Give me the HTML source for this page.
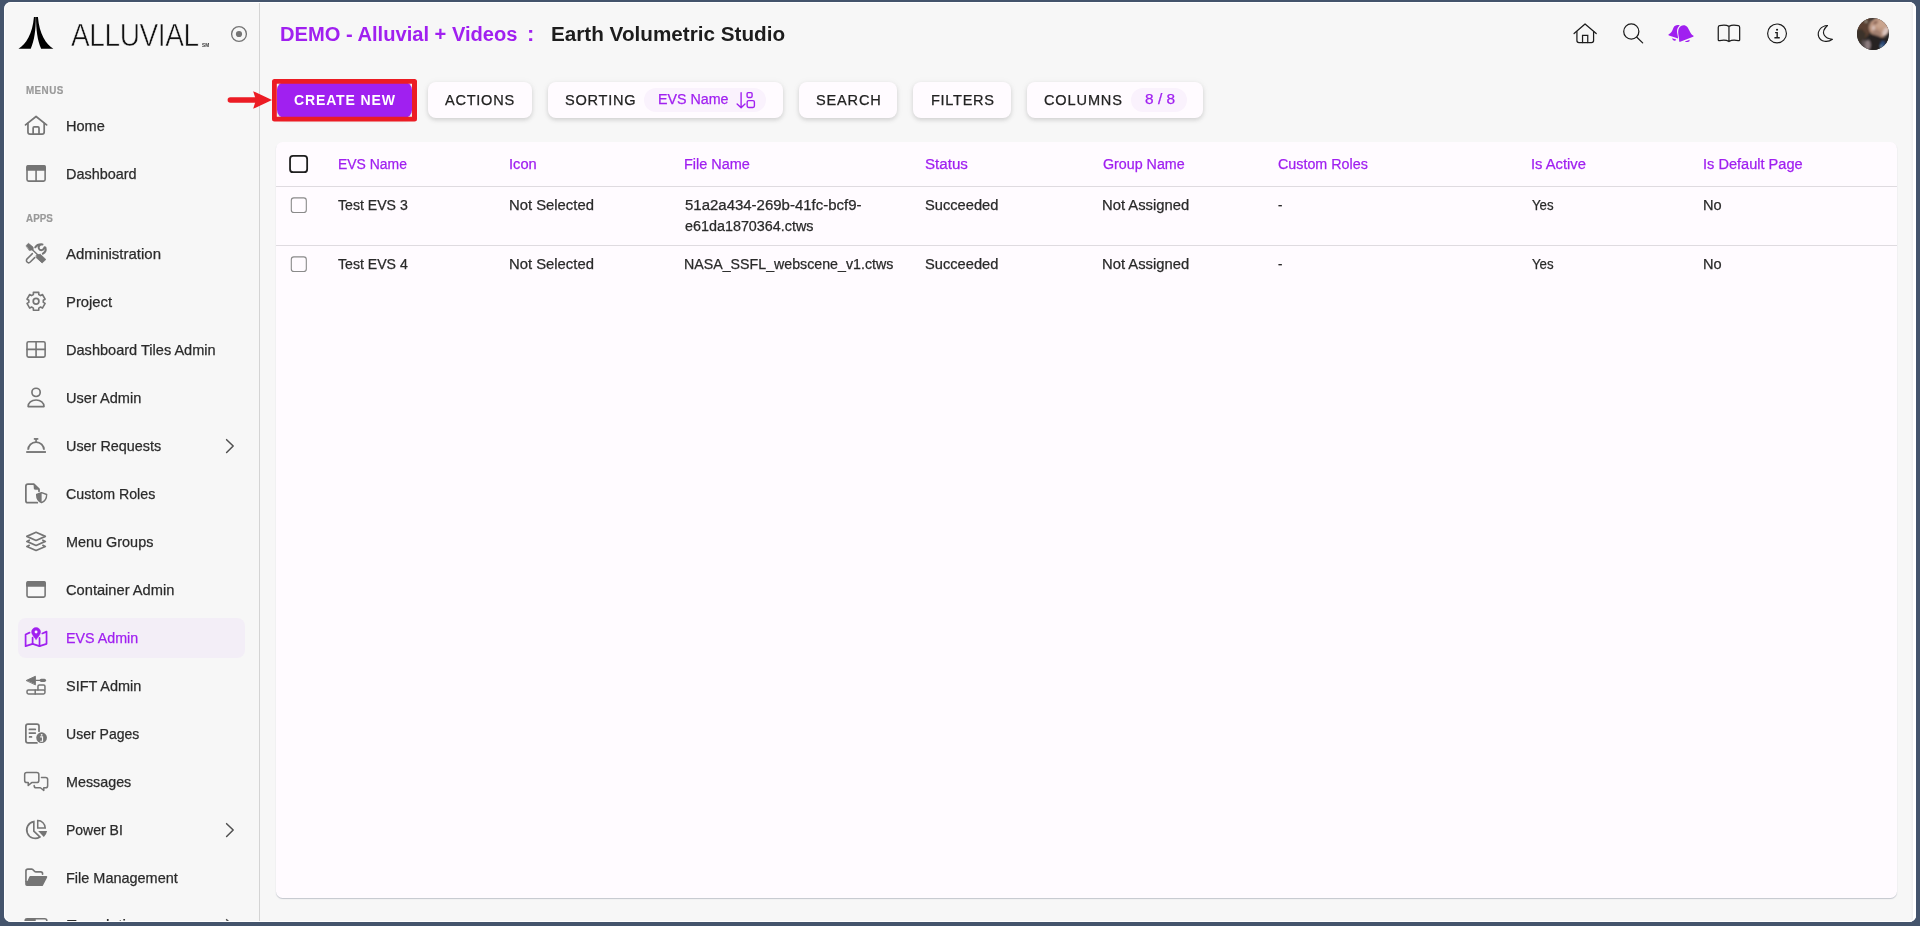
<!DOCTYPE html>
<html lang="en">
<head>
<meta charset="utf-8">
<title>Earth Volumetric Studio</title>
<style>
*{box-sizing:border-box;margin:0;padding:0}
html,body{width:1920px;height:926px;overflow:hidden;background:#44546c}
body{font-family:"Liberation Sans",sans-serif;color:#222;position:relative}
#app{position:absolute;left:4px;top:2px;width:1912px;height:920px;background:#f7f7f7;border-radius:7px;overflow:hidden}
#pg{position:absolute;left:-4px;top:-2px;width:1920px;height:926px}
#edge{position:absolute;left:4px;top:2px;width:1912px;height:920px;border-radius:7px;box-shadow:inset 0 0 0 1px #fff;pointer-events:none}
.a{position:absolute}
.x{position:absolute;white-space:nowrap;line-height:20px;transform-origin:0 50%;-webkit-text-stroke:.25px currentColor}
#sideline{position:absolute;left:259px;top:0;width:1px;height:926px;background:#d4d4d4}
.on{position:absolute;left:18px;top:618px;width:227px;height:40px;border-radius:8px;background:#f3eef7}
.btn{position:absolute;top:82px;height:36px;border-radius:8px;background:#fffbff;box-shadow:0 2px 4px rgba(0,0,0,.13),0 1px 8px rgba(0,0,0,.05)}
.chip{position:absolute;top:88px;height:24px;border-radius:12px;background:#faf2fd}
#card{position:absolute;left:276px;top:142px;width:1621px;height:756px;background:#fffbff;border-radius:6.5px;box-shadow:0 1px 1px rgba(100,110,130,.35)}
.hl{position:absolute;left:276px;width:1621px;height:1px;background:#dfdbe0}
.cb{position:absolute;border-radius:3px;background:#fffbff}
svg{position:absolute;overflow:visible}
</style>
</head>
<body>
<div id="app"><div id="pg">

<div class="a" style="left:1910px;top:0;width:3px;height:926px;background:linear-gradient(90deg,#f7f7f7,#eeeeee)"></div><div class="a" style="left:1913px;top:0;width:4px;height:926px;background:#fff"></div>
<!-- sidebar -->
<div id="sideline"></div>
<div class="on"></div>

<!-- toolbar -->
<div class="a" style="left:277px;top:82px;width:135px;height:36px;background:#a020f0;border-radius:8px;box-shadow:0 2px 4px rgba(0,0,0,.13)"></div>
<svg style="left:270px;top:77px" width="150" height="47" viewBox="270 77 150 47"><path fill="#ec1c24" fill-rule="evenodd" d="M274.5,79 H414.5 a2.5,2.5 0 0 1 2.5,2.5 V119 a2.5,2.5 0 0 1 -2.5,2.5 H274.5 a2.5,2.5 0 0 1 -2.5,-2.5 V81.5 a2.5,2.5 0 0 1 2.5,-2.5Z M276.8,83.8 V116.7 H412 V83.8Z"/></svg>
<div class="btn" style="left:428px;width:104px"></div>
<div class="btn" style="left:548px;width:235px"></div>
<div class="btn" style="left:799px;width:98px"></div>
<div class="btn" style="left:913px;width:98px"></div>
<div class="btn" style="left:1027px;width:176px"></div>
<div class="chip" style="left:644px;width:122px"></div>
<div class="chip" style="left:1131px;width:56px"></div>

<!-- table -->
<div id="card"></div>
<div class="hl" style="top:186px"></div>
<div class="hl" style="top:245px"></div>
<svg style="left:288px;top:154px" width="22" height="21" viewBox="288 154 22 21"><rect x="290.05" y="155.95" width="17.1" height="16.2" rx="3" fill="#fffbff" stroke="#1f1f1f" stroke-width="1.8"/></svg>
<svg style="left:289px;top:195px" width="20" height="20" viewBox="289 195 20 20"><rect x="291.3" y="197.9" width="15" height="14.6" rx="2.6" fill="#fffbff" stroke="#8a8a8a" stroke-width="1.1"/></svg>
<svg style="left:289px;top:254px" width="20" height="20" viewBox="289 254 20 20"><rect x="291.3" y="256.9" width="15" height="14.6" rx="2.6" fill="#fffbff" stroke="#8a8a8a" stroke-width="1.1"/></svg>

<span class="x" style="left:26.20px;top:80.29px;font-size:10.7px;color:#999999;letter-spacing:0.465px;font-weight:700;transform:scaleX(0.9200);-webkit-text-stroke:.2px #999999">MENUS</span>
<span class="x" style="left:26.20px;top:208.29px;font-size:10.7px;color:#999999;letter-spacing:0.052px;font-weight:700;transform:scaleX(0.9200);-webkit-text-stroke:.2px #999999">APPS</span>
<span class="x" style="left:65.52px;top:115.87px;font-size:14.8px;color:#2b2b2b;transform:scaleX(0.9832)">Home</span>
<span class="x" style="left:65.52px;top:163.87px;font-size:14.8px;color:#2b2b2b;transform:scaleX(0.9753)">Dashboard</span>
<span class="x" style="left:66.10px;top:243.87px;font-size:14.8px;color:#2b2b2b;transform:scaleX(1.0137)">Administration</span>
<span class="x" style="left:66.30px;top:291.87px;font-size:14.8px;color:#2b2b2b;transform:scaleX(1.0020)">Project</span>
<span class="x" style="left:65.52px;top:339.87px;font-size:14.8px;color:#2b2b2b;transform:scaleX(0.9835)">Dashboard Tiles Admin</span>
<span class="x" style="left:65.52px;top:387.87px;font-size:14.8px;color:#2b2b2b;transform:scaleX(0.9847)">User Admin</span>
<span class="x" style="left:65.53px;top:435.87px;font-size:14.8px;color:#2b2b2b;transform:scaleX(0.9724)">User Requests</span>
<span class="x" style="left:66.20px;top:483.87px;font-size:14.8px;color:#2b2b2b;transform:scaleX(0.9608)">Custom Roles</span>
<span class="x" style="left:65.53px;top:531.87px;font-size:14.8px;color:#2b2b2b;transform:scaleX(0.9745)">Menu Groups</span>
<span class="x" style="left:66.20px;top:579.87px;font-size:14.8px;color:#2b2b2b;transform:scaleX(0.9902)">Container Admin</span>
<span class="x" style="left:65.54px;top:627.87px;font-size:14.8px;color:#a020f0;transform:scaleX(0.9646)">EVS Admin</span>
<span class="x" style="left:66.20px;top:675.87px;font-size:14.8px;color:#2b2b2b;transform:scaleX(0.9771)">SIFT Admin</span>
<span class="x" style="left:65.55px;top:723.87px;font-size:14.8px;color:#2b2b2b;transform:scaleX(0.9485)">User Pages</span>
<span class="x" style="left:65.53px;top:771.87px;font-size:14.8px;color:#2b2b2b;transform:scaleX(0.9676)">Messages</span>
<span class="x" style="left:66.35px;top:819.87px;font-size:14.8px;color:#2b2b2b;transform:scaleX(0.9461)">Power BI</span>
<span class="x" style="left:65.52px;top:867.87px;font-size:14.8px;color:#2b2b2b;transform:scaleX(0.9778)">File Management</span>
<span class="x" style="left:66.50px;top:914.87px;font-size:14.8px;color:#2b2b2b;transform:scaleX(1.0484)">Translations</span>
<span class="x" style="left:71.10px;top:25.43px;font-size:30.5px;color:#111111;letter-spacing:-0.456px;transform:scaleX(0.9200);-webkit-text-stroke:0.6px #f7f7f7">ALLUVIAL</span>
<span class="x" style="left:201.80px;top:35.67px;font-size:4.7px;color:#333333;font-weight:700;transform:scaleX(1.0103);-webkit-text-stroke:0">SM</span>
<span class="x" style="left:280.29px;top:24.07px;font-size:20px;color:#a020f0;font-weight:700;transform:scaleX(1.0056);-webkit-text-stroke:0">DEMO - Alluvial + Videos</span>
<span class="x" style="left:526.70px;top:24.07px;font-size:20px;color:#a020f0;font-weight:700;transform:scaleX(1.1000);-webkit-text-stroke:0">:</span>
<span class="x" style="left:550.97px;top:24.07px;font-size:20px;color:#1d1d1d;font-weight:700;transform:scaleX(1.0342);-webkit-text-stroke:0">Earth Volumetric Studio</span>
<span class="x" style="left:293.50px;top:90.15px;font-size:14px;color:#ffffff;letter-spacing:0.849px;font-weight:700;transform:scaleX(1.0020);-webkit-text-stroke:0">CREATE NEW</span>
<span class="x" style="left:445.40px;top:90.15px;font-size:14px;color:#222222;letter-spacing:0.711px;transform:scaleX(1.0400)">ACTIONS</span>
<span class="x" style="left:564.90px;top:90.15px;font-size:14px;color:#222222;letter-spacing:0.730px;transform:scaleX(1.0400)">SORTING</span>
<span class="x" style="left:816.40px;top:90.15px;font-size:14px;color:#222222;letter-spacing:0.784px;transform:scaleX(1.0400)">SEARCH</span>
<span class="x" style="left:930.66px;top:90.15px;font-size:14px;color:#222222;letter-spacing:0.674px;transform:scaleX(1.0400)">FILTERS</span>
<span class="x" style="left:1044.40px;top:90.15px;font-size:14px;color:#222222;letter-spacing:0.824px;transform:scaleX(1.0400)">COLUMNS</span>
<span class="x" style="left:658.48px;top:89.15px;font-size:14px;color:#a020f0;transform:scaleX(1.0181)">EVS Name</span>
<span class="x" style="left:1144.60px;top:89.15px;font-size:14px;color:#a020f0;letter-spacing:0.023px;transform:scaleX(1.1000)">8 / 8</span>
<span class="x" style="left:337.61px;top:154.15px;font-size:14px;color:#a020f0;transform:scaleX(0.9947)">EVS Name</span>
<span class="x" style="left:509.25px;top:154.15px;font-size:14px;color:#a020f0;transform:scaleX(1.0456)">Icon</span>
<span class="x" style="left:683.67px;top:154.15px;font-size:14px;color:#a020f0;transform:scaleX(1.0332)">File Name</span>
<span class="x" style="left:925.10px;top:154.15px;font-size:14px;color:#a020f0;transform:scaleX(1.0809)">Status</span>
<span class="x" style="left:1102.50px;top:154.15px;font-size:14px;color:#a020f0;transform:scaleX(1.0192)">Group Name</span>
<span class="x" style="left:1277.80px;top:154.15px;font-size:14px;color:#a020f0;transform:scaleX(1.0214)">Custom Roles</span>
<span class="x" style="left:1531.25px;top:154.15px;font-size:14px;color:#a020f0;transform:scaleX(1.0534)">Is Active</span>
<span class="x" style="left:1703.16px;top:154.15px;font-size:14px;color:#a020f0;transform:scaleX(1.0407)">Is Default Page</span>
<span class="x" style="left:338.00px;top:195.15px;font-size:14px;color:#2a2a2a;transform:scaleX(1.0076)">Test EVS 3</span>
<span class="x" style="left:509.44px;top:195.15px;font-size:14px;color:#2a2a2a;transform:scaleX(1.0591)">Not Selected</span>
<span class="x" style="left:925.10px;top:195.15px;font-size:14px;color:#2a2a2a;transform:scaleX(1.0467)">Succeeded</span>
<span class="x" style="left:1102.24px;top:195.15px;font-size:14px;color:#2a2a2a;transform:scaleX(1.0567)">Not Assigned</span>
<span class="x" style="left:1277.60px;top:195.15px;font-size:14px;color:#2a2a2a;transform:scaleX(0.9400)">-</span>
<span class="x" style="left:1531.90px;top:195.15px;font-size:14px;color:#2a2a2a;transform:scaleX(0.9458)">Yes</span>
<span class="x" style="left:1703.16px;top:195.15px;font-size:14px;color:#2a2a2a;transform:scaleX(1.0403)">No</span>
<span class="x" style="left:338.00px;top:254.15px;font-size:14px;color:#2a2a2a;transform:scaleX(1.0076)">Test EVS 4</span>
<span class="x" style="left:509.44px;top:254.15px;font-size:14px;color:#2a2a2a;transform:scaleX(1.0591)">Not Selected</span>
<span class="x" style="left:683.68px;top:254.15px;font-size:14px;color:#2a2a2a;transform:scaleX(1.0150)">NASA_SSFL_webscene_v1.ctws</span>
<span class="x" style="left:925.10px;top:254.15px;font-size:14px;color:#2a2a2a;transform:scaleX(1.0467)">Succeeded</span>
<span class="x" style="left:1102.24px;top:254.15px;font-size:14px;color:#2a2a2a;transform:scaleX(1.0567)">Not Assigned</span>
<span class="x" style="left:1277.60px;top:254.15px;font-size:14px;color:#2a2a2a;transform:scaleX(0.9400)">-</span>
<span class="x" style="left:1531.90px;top:254.15px;font-size:14px;color:#2a2a2a;transform:scaleX(0.9458)">Yes</span>
<span class="x" style="left:1703.16px;top:254.15px;font-size:14px;color:#2a2a2a;transform:scaleX(1.0403)">No</span>
<span class="x" style="left:684.70px;top:195.15px;font-size:14px;color:#2a2a2a;transform:scaleX(1.0693)">51a2a434-269b-41fc-bcf9-</span>
<span class="x" style="left:684.70px;top:216.15px;font-size:14px;color:#2a2a2a;transform:scaleX(1.0253)">e61da1870364.ctws</span>

<svg style="left:0;top:0" width="60" height="60" viewBox="0 0 60 60" fill="#000"><path d="M33.93,16.9 L35.81,16.9 C35.81,30 34.43,40 30.73,48.8 L18.48,48.8 C25.93,44 32.53,34 33.93,16.9Z"/><path d="M37.93,16.9 L36.05,16.9 C36.05,30 37.43,40 41.13,48.8 L53.38,48.8 C45.93,44 39.33,34 37.93,16.9Z"/></svg>
<svg style="left:229px;top:24px" width="20" height="20" viewBox="0 0 20 20"><circle cx="10" cy="10" r="7.4" fill="none" stroke="#757575" stroke-width="1.35"/><circle cx="10" cy="10" r="3.1" fill="#757575"/></svg>
<svg style="left:20px;top:110px" width="32" height="32" viewBox="0 0 926 926" fill="none" stroke="#757575" stroke-width="50" stroke-linecap="round" stroke-linejoin="round"><path d="M160,432 L465,187 L770,432"/><path d="M230,390 V640 a60,60 0 0 0 60,60 H640 a60,60 0 0 0 60,-60 V390"/><path d="M380,700 V520 a30,30 0 0 1 30,-30 H520 a30,30 0 0 1 30,30 V700"/></svg>
<svg style="left:20px;top:158px" width="32" height="32" viewBox="0 0 926 926" fill="none" stroke="#757575" stroke-width="46" stroke-linecap="round" stroke-linejoin="round"><rect x="203" y="222" width="524" height="446" rx="45"/><path d="M203,345 V262 a40,40 0 0 1 40,-40 H687 a40,40 0 0 1 40,40 V345Z" fill="#757575"/><path d="M465,345 V668"/></svg>
<svg style="left:20px;top:238px" width="32" height="32" viewBox="0 0 926 926" fill="none" stroke="#757575" stroke-width="50" stroke-linecap="round" stroke-linejoin="round"><path d="M180,218 L245,155 L378,262 L385,335 L280,362Z" fill="#757575" stroke-width="20"/><path d="M350,330 L520,490" stroke-width="42"/><path d="M482,492 L590,472 L748,622 L640,722 L472,568Z" fill="#757575" stroke-width="24"/><path d="M358,452 L205,605 a65,65 0 0 0 92,92 L425,568" stroke-width="44"/><path d="M442,268 Q505,172 650,186" stroke-width="60"/><path d="M568,212 C512,270 545,354 615,352 C663,350 698,316 710,268" stroke-width="56"/><path d="M736,280 Q768,390 662,453" stroke-width="60"/></svg>
<svg style="left:20px;top:286px" width="32" height="32" viewBox="0 0 926 926" fill="none" stroke="#757575" stroke-width="50" stroke-linecap="round" stroke-linejoin="round"><path d="M387,247 L387,185 L543,185 L543,247 L596,277 L649,246 L727,382 L674,413 L674,473 L727,504 L649,640 L596,609 L543,639 L543,701 L387,701 L387,639 L334,609 L281,640 L203,504 L256,473 L256,413 L203,382 L281,246 L334,277Z" stroke-width="46"/><circle cx="465" cy="443" r="82"/></svg>
<svg style="left:20px;top:334px" width="32" height="32" viewBox="0 0 926 926" fill="none" stroke="#757575" stroke-width="46" stroke-linecap="round" stroke-linejoin="round"><rect x="203" y="222" width="524" height="446" rx="45"/><path d="M465,222 V668 M203,445 H727"/></svg>
<svg style="left:20px;top:382px" width="32" height="32" viewBox="0 0 926 926" fill="none" stroke="#757575" stroke-width="48" stroke-linecap="round" stroke-linejoin="round"><circle cx="465" cy="300" r="120"/><path d="M235,712 C235,600 330,520 465,520 C600,520 695,600 695,712Z"/></svg>
<svg style="left:20px;top:430px" width="32" height="32" viewBox="0 0 926 926" fill="none" stroke="#757575" stroke-width="50" stroke-linecap="round" stroke-linejoin="round"><path d="M180,637 H750" stroke-width="54" stroke-linecap="butt"/><path d="M236,575 A229,225 0 0 1 694,575" stroke-width="54" stroke-linecap="butt"/><path d="M465,262 V345" stroke-width="46" stroke-linecap="butt"/><path d="M400,258 H530" stroke-width="50" stroke-linecap="butt"/></svg>
<svg style="left:20px;top:478px" width="32" height="32" viewBox="0 0 926 926" fill="none" stroke="#757575" stroke-width="50" stroke-linecap="round" stroke-linejoin="round"><path d="M500,715 H230 a60,60 0 0 1 -60,-60 V240 a60,60 0 0 1 60,-60 H400 L550,325 V385"/><path d="M405,195 L545,335 H445 a40,40 0 0 1 -40,-40Z" fill="#757575" stroke-width="14"/><path d="M625,422 L482,478 C482,600 540,680 625,712 C710,680 772,600 772,478Z" stroke-width="40"/><path d="M625,422 L482,478 C482,600 540,680 625,712Z" fill="#757575" stroke="none"/></svg>
<svg style="left:20px;top:526px" width="32" height="32" viewBox="0 0 926 926" fill="none" stroke="#757575" stroke-width="48" stroke-linecap="round" stroke-linejoin="round"><path d="M465,182 L733,300 L465,418 L197,300Z"/><path d="M268,412 L197,445 L465,565 L733,445 L662,412"/><path d="M268,557 L197,590 L465,710 L733,590 L662,557"/></svg>
<svg style="left:20px;top:574px" width="32" height="32" viewBox="0 0 926 926" fill="none" stroke="#757575" stroke-width="46" stroke-linecap="round" stroke-linejoin="round"><rect x="203" y="222" width="524" height="446" rx="45"/><path d="M203,345 V262 a40,40 0 0 1 40,-40 H687 a40,40 0 0 1 40,40 V345Z" fill="#757575"/></svg>
<svg style="left:20px;top:622px" width="32" height="32" viewBox="0 0 926 926" fill="none" stroke="#a020f0" stroke-width="50" stroke-linecap="round" stroke-linejoin="round"><path d="M278,308 L162,360 V700 L365,632 L565,700 L768,632 V278 L645,332"/><path d="M365,450 V632 M565,460 V700"/><path d="M465,505 C410,440 335,360 335,290 a130,130 0 0 1 260,0 C595,360 520,440 465,505Z" fill="#a020f0" stroke-width="14"/><circle cx="465" cy="288" r="42" fill="#fbf6fd" stroke="none"/></svg>
<svg style="left:20px;top:670px" width="32" height="32" viewBox="0 0 926 926" fill="none" stroke="#757575" stroke-width="44" stroke-linecap="round" stroke-linejoin="round"><path d="M188,300 L446,180 V420Z" fill="#757575" stroke-width="26"/><path d="M455,300 H600" stroke-width="32"/><path d="M614,300 H708" stroke-width="90"/><rect x="203" y="577" width="519" height="116" rx="40"/><path d="M440,577 V693"/><path d="M520,577 V472 a40,40 0 0 1 40,-40 H682 a40,40 0 0 1 40,40 V577"/></svg>
<svg style="left:20px;top:718px" width="32" height="32" viewBox="0 0 926 926" fill="none" stroke="#757575" stroke-width="50" stroke-linecap="round" stroke-linejoin="round"><path d="M490,720 H230 a60,60 0 0 1 -60,-60 V240 a60,60 0 0 1 60,-60 H490 a60,60 0 0 1 60,60 V380"/><path d="M272,330 H442 M272,437 H442 M278,547 H332"/><circle cx="625" cy="570" r="155" fill="#757575" stroke="none"/><circle cx="627" cy="487" r="27" fill="#f7f7f7" stroke="none"/><path d="M585,548 H652 V672 M585,672 H668" stroke="#f7f7f7" stroke-width="34" stroke-linecap="butt" stroke-linejoin="miter"/></svg>
<svg style="left:20px;top:766px" width="32" height="32" viewBox="0 0 926 926" fill="none" stroke="#757575" stroke-width="44" stroke-linecap="round" stroke-linejoin="round"><path d="M195,185 H485 a60,60 0 0 1 60,60 V420 a60,60 0 0 1 -60,60 H340 L238,562 V480 H195 a60,60 0 0 1 -60,-60 V245 a60,60 0 0 1 60,-60Z"/><path d="M622,330 H740 a60,60 0 0 1 60,60 V570 a60,60 0 0 1 -60,60 H688 V708 L590,630 H470 a60,60 0 0 1 -60,-60 V565"/></svg>
<svg style="left:20px;top:814px" width="32" height="32" viewBox="0 0 926 926" fill="none" stroke="#757575" stroke-width="50" stroke-linecap="round" stroke-linejoin="round"><path d="M400,219 A245,245 0 1 0 575,665 L400,495Z" stroke-width="48" stroke-linejoin="miter"/><path d="M513,190 A215,215 0 0 1 730,402 H513Z" stroke-width="44" stroke-linejoin="miter"/><path d="M525,495 H785 A290,290 0 0 1 690,662Z" fill="#757575" stroke="none"/></svg>
<svg style="left:20px;top:862px" width="32" height="32" viewBox="0 0 926 926" fill="none" stroke="#757575" stroke-width="50" stroke-linecap="round" stroke-linejoin="round"><path d="M172,560 V262 a55,55 0 0 1 55,-55 H340 C395,207 400,287 455,287 H598 a55,55 0 0 1 55,55 V355" stroke-width="48"/><path d="M300,405 H760 Q800,405 785,445 L665,680 Q655,695 640,695 H200 Q150,695 150,645 V550 H215 L270,430 Q282,405 300,405Z" fill="#757575" stroke="none"/></svg>
<svg style="left:20px;top:910px" width="32" height="32" viewBox="0 0 926 926" fill="none" stroke="#757575" stroke-width="46" stroke-linecap="round" stroke-linejoin="round"><rect x="150" y="252" width="626" height="446" rx="60"/><path d="M150,252 H455 V668 H150Z" fill="#757575" stroke="none"/></svg>
<svg style="left:214px;top:430px" width="32" height="32" viewBox="0 0 926 926" fill="none" stroke="#505050" stroke-width="44" stroke-linecap="round" stroke-linejoin="round"><path d="M365,280 L555,465 L365,650"/></svg>
<svg style="left:214px;top:814px" width="32" height="32" viewBox="0 0 926 926" fill="none" stroke="#505050" stroke-width="44" stroke-linecap="round" stroke-linejoin="round"><path d="M365,280 L555,465 L365,650"/></svg>
<svg style="left:214px;top:910px" width="32" height="32" viewBox="0 0 926 926" fill="none" stroke="#505050" stroke-width="44" stroke-linecap="round" stroke-linejoin="round"><path d="M365,280 L555,465 L365,650"/></svg>
<svg style="left:220px;top:80px" width="64" height="40" viewBox="0 0 1482 926"><path d="M240,465 H900" stroke="#ec1c24" stroke-width="128" stroke-linecap="round"/><path d="M1205,462 L768,258 L832,465 L768,668Z" fill="#ec1c24"/></svg>
<svg style="left:726px;top:84px" width="48" height="32" viewBox="0 0 1389 926" fill="none" stroke="#a020f0" stroke-width="40" stroke-linecap="round" stroke-linejoin="round"><path d="M437,250 V680 M322,580 L437,690 L550,580"/><rect x="610" y="250" width="145" height="140" rx="32"/><rect x="612" y="480" width="210" height="200" rx="42"/></svg>
<svg style="left:1569px;top:18px" width="80" height="32" viewBox="0 0 1920 768" fill="none" stroke="#1d1d1d" stroke-width="30" stroke-linecap="round" stroke-linejoin="round"><path d="M122,373 L385,142 L653,373"/><path d="M190,325 V540 a50,50 0 0 0 50,50 H540 a50,50 0 0 0 50,-50 V325"/><path d="M325,590 V415 H450 V590" stroke-linejoin="miter"/><circle cx="1495" cy="325" r="182"/><path d="M1628,462 L1768,598"/></svg>
<svg style="left:1665px;top:18px" width="80" height="32" viewBox="0 0 1920 768" fill="none" stroke="#a020f0" stroke-width="30" stroke-linecap="round" stroke-linejoin="round"><path d="M340,555 C345,450 290,340 335,245 C375,165 480,150 535,215 C585,275 600,380 685,425 Q695,440 675,450 L365,570 Q340,575 340,555Z" fill="#a020f0" stroke="none"/><path d="M478,562 L592,520 Q602,560 552,576 Q500,586 478,562Z" fill="#a020f0" stroke="none"/><path d="M355,180 C300,160 230,170 200,240 C170,320 150,360 85,395 Q70,410 95,420 L315,490 C310,420 280,350 290,290 C300,230 330,200 355,180Z" fill="#a020f0" stroke="none"/><path d="M170,485 L268,517 Q262,548 225,546 Q180,536 170,485Z" fill="#a020f0" stroke="none"/><g stroke="#1d1d1d"><path d="M1535,200 C1480,170 1380,170 1310,185 Q1278,192 1278,225 V520 Q1278,550 1310,545 C1390,525 1480,530 1535,565 C1590,530 1680,525 1760,545 Q1792,550 1792,520 V225 Q1792,192 1760,185 C1690,170 1590,170 1535,200 V565"/></g></svg>
<svg style="left:1761px;top:18px" width="80" height="32" viewBox="0 0 1920 768" fill="none" stroke="#1d1d1d" stroke-width="30" stroke-linecap="round" stroke-linejoin="round"><circle cx="385" cy="370" r="226" stroke-width="28"/><circle cx="385" cy="282" r="26" fill="#1d1d1d" stroke="none"/><path d="M338,350 H388 V470 M322,475 H450" stroke-width="34" stroke-linecap="butt" stroke-linejoin="miter"/><path d="M1595,180 C1440,190 1340,320 1385,450 C1430,570 1600,600 1715,510 C1540,500 1400,360 1595,180Z" stroke-width="28"/></svg>
<svg style="left:1857px;top:18px" width="32" height="32" viewBox="0 0 32 32"><defs><clipPath id="avc"><circle cx="16" cy="16" r="16"/></clipPath><filter id="avb" x="-20%" y="-20%" width="140%" height="140%"><feGaussianBlur stdDeviation="0.9"/></filter></defs><g clip-path="url(#avc)"><rect width="32" height="32" fill="#272525"/><g filter="url(#avb)"><path d="M-2,-2 H14 L11.5,8 L13.5,14 L9,20 L-2,23Z" fill="#5a4130"/><path d="M-2,12 L5,11 L9,16 L7,24 L-2,26Z" fill="#3b302a"/><ellipse cx="22.5" cy="9.5" rx="10.5" ry="10.2" fill="#bd9680" transform="rotate(20 22.5 9.5)"/><ellipse cx="24" cy="6" rx="6" ry="4" fill="#c9a48e"/><ellipse cx="28.5" cy="13.5" rx="2.6" ry="4.5" fill="#dcc6bf" transform="rotate(25 28.5 13.5)"/><ellipse cx="18.6" cy="4.6" rx="2.6" ry="1.6" fill="#8b6557" transform="rotate(-25 18.6 4.6)"/><ellipse cx="20" cy="15" rx="5" ry="3" fill="#a17f70" transform="rotate(25 20 15)"/><ellipse cx="16.5" cy="10" rx="1.6" ry="2.4" fill="#d8c0b8"/><path d="M12,15 L33,22 V34 H12Z" fill="#252323"/><ellipse cx="10.5" cy="27" rx="3.2" ry="5" fill="#8c7d7f"/><ellipse cx="6.5" cy="25.5" rx="2" ry="3.5" fill="#5e5454"/><ellipse cx="25.8" cy="27" rx="2.4" ry="4" fill="#2c4b7c"/><ellipse cx="24.2" cy="28.3" rx="0.7" ry="1.6" fill="#8fb4d4"/><circle cx="9" cy="3.6" r="1.1" fill="#b9b9aa"/></g></g></svg>

</div></div>
<div id="edge"></div>
</body>
</html>
